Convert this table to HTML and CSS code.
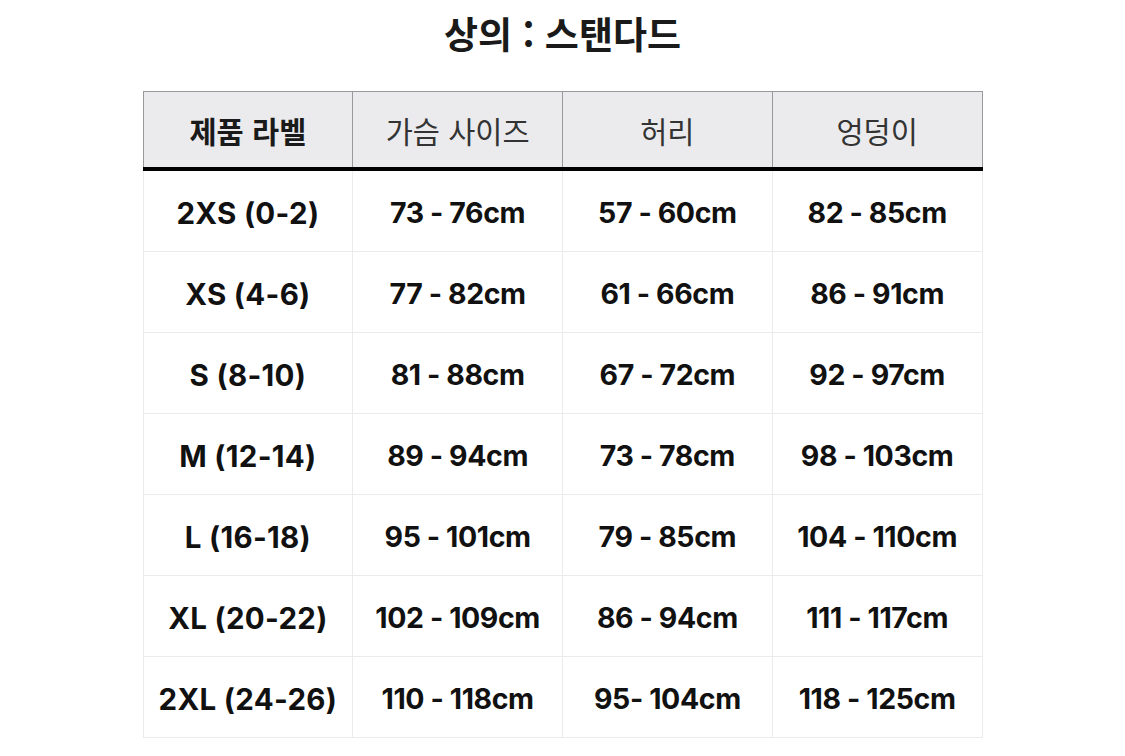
FILE: index.html
```html
<!DOCTYPE html>
<html lang="ko">
<head>
<meta charset="utf-8">
<link rel="stylesheet" href="styles.css">
</head>
<body>
<div class="page">
  <h1 class="title">상의 : 스탠다드</h1>
  <table class="size-table">
    <thead>
      <tr>
        <th class="strong">제품 라벨</th>
        <th>가슴 사이즈</th>
        <th>허리</th>
        <th>엉덩이</th>
      </tr>
    </thead>
    <tbody>
      <tr><td class="label">2XS (0-2)</td><td>73 - 76cm</td><td>57 - 60cm</td><td>82 - 85cm</td></tr>
      <tr><td class="label">XS (4-6)</td><td>77 - 82cm</td><td>61 - 66cm</td><td>86 - 91cm</td></tr>
      <tr><td class="label">S (8-10)</td><td>81 - 88cm</td><td>67 - 72cm</td><td>92 - 97cm</td></tr>
      <tr><td class="label">M (12-14)</td><td>89 - 94cm</td><td>73 - 78cm</td><td>98 - 103cm</td></tr>
      <tr><td class="label">L (16-18)</td><td>95 - 101cm</td><td>79 - 85cm</td><td>104 - 110cm</td></tr>
      <tr><td class="label">XL (20-22)</td><td>102 - 109cm</td><td>86 - 94cm</td><td>111 - 117cm</td></tr>
      <tr><td class="label">2XL (24-26)</td><td>110 - 118cm</td><td>95- 104cm</td><td>118 - 125cm</td></tr>
    </tbody>
  </table>
</div>
</body>
</html>
```
FILE: styles.css
```css
html, body {
  margin: 0;
  padding: 0;
  background: #ffffff;
}
.page {
  display: flex;
  flex-direction: column;
  align-items: center;
  font-family: Inter, "Noto Sans CJK KR", "Noto Sans", sans-serif;
  color: #111111;
}
.title {
  margin: 8px 0 0 0;
  height: 83px;
  line-height: 50px;
  font-size: 37px;
  font-weight: 700;
  font-family: "Noto Sans CJK KR", sans-serif;
  color: #1a1a1a;
}
.size-table {
  width: 840px;
  border-collapse: collapse;
  table-layout: fixed;
}
.size-table th {
  height: 75px;
  background: #ebebed;
  border: 1px solid #999999;
  border-bottom: 4px solid #000000;
  font-family: "Noto Sans CJK KR", sans-serif;
  font-weight: 400;
  font-size: 29.5px;
  color: #333333;
  padding: 0;
}
.size-table th.strong {
  font-weight: 700;
  color: #1a1a1a;
}
.size-table td {
  height: 77px;
  padding: 3px 0 0 0;
  border: 1px solid #ebebeb;
  text-align: center;
  font-weight: 700;
  font-size: 28.5px;
  color: #111111;
  letter-spacing: -0.4px;
}
.size-table td.label {
  font-size: 29.5px;
  letter-spacing: 0.3px;
}
```
